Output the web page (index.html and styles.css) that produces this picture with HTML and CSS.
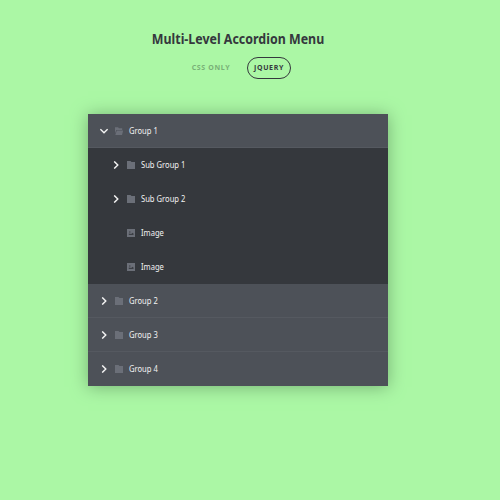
FILE: index.html
```html
<!DOCTYPE html>
<html lang="en">
<head>
<meta charset="utf-8">
<title>Multi-Level Accordion Menu</title>
<link rel="stylesheet" href="styles.css">
</head>
<body>
<svg class="defs" aria-hidden="true">
  <symbol id="right" viewBox="0 0 8 8"><path d="M2.2 .4 5.8 4 2.2 7.6" fill="none" stroke="#f4f4f4" stroke-width="1.4"/></symbol>
  <symbol id="down" viewBox="0 0 8 8"><path d="M.4 2.2 4 5.8 7.6 2.2" fill="none" stroke="#f4f4f4" stroke-width="1.4"/></symbol>
  <symbol id="folder" viewBox="0 0 8 8"><path d="M0 0h3.5l1 1H8v7H0z" fill="#6b6f78"/></symbol>
  <symbol id="open" viewBox="0 0 8 8"><path d="M0 .3h3l1 1h3.2v1.7H1.3L0 6.5zM1.8 3.4H8.2L7 8H.3z" fill="#6b6f78"/></symbol>
  <symbol id="image" viewBox="0 0 8 8"><path d="M0 0h8v8H0z" fill="#6b6f78"/><path d="M1.8 6V4.4l1.4.4 1.2.2.8-1.2L6.5 4.6V6zM2 2.4h1.5v1H2z" fill="#3c3f45"/></symbol>
</svg>
<header>
  <h1>Multi-Level Accordion Menu</h1>
  <nav><a class="css">CSS Only</a><a class="selected">jQuery</a></nav>
</header>
<ul class="menu">
  <li><a class="row"><svg class="arrow"><use href="#down"/></svg><svg class="icon"><use href="#open"/></svg><span>Group 1</span></a>
    <ul class="sub">
      <li class="row"><svg class="arrow"><use href="#right"/></svg><svg class="icon"><use href="#folder"/></svg><span>Sub Group 1</span></li>
      <li class="row"><svg class="arrow"><use href="#right"/></svg><svg class="icon"><use href="#folder"/></svg><span>Sub Group 2</span></li>
      <li class="row leaf"><svg class="icon"><use href="#image"/></svg><span>Image</span></li>
      <li class="row leaf"><svg class="icon"><use href="#image"/></svg><span>Image</span></li>
    </ul>
  </li>
  <li><a class="row"><svg class="arrow"><use href="#right"/></svg><svg class="icon"><use href="#folder"/></svg><span>Group 2</span></a></li>
  <li><a class="row"><svg class="arrow"><use href="#right"/></svg><svg class="icon"><use href="#folder"/></svg><span>Group 3</span></a></li>
  <li><a class="row"><svg class="arrow"><use href="#right"/></svg><svg class="icon"><use href="#folder"/></svg><span>Group 4</span></a></li>
</ul>
</body>
</html>
```
FILE: styles.css
```css
* { box-sizing: border-box; }
body {
  margin: 0;
  height: 500px;
  overflow: hidden;
  background: #abf7a5;
  color: #35383d;
  font-family: "Noto Sans", sans-serif;
}
.defs { display: none; }
header { width: 476px; padding-top: 29px; text-align: center; }
h1 { margin: 0; font-size: 14px; line-height: 20px; font-weight: 700; transform: scaleX(.887); white-space: nowrap; }
nav { display: flex; gap: 11px; margin: 8px 0 0 186px; font-size: 7px; font-weight: 700; line-height: 20px; letter-spacing: .65px; text-transform: uppercase; }
nav a { height: 22px; border: 1px solid transparent; border-radius: 11px; white-space: nowrap; }
.css { width: 50px; color: #79b077; }
.selected { width: 44px; border-color: #35383d; }
ul { margin: 0; padding: 0; list-style: none; }
.menu { width: 300px; margin: 35px 0 0 88px; box-shadow: 0 1px 16px #75b073; }
.row {
  display: flex;
  align-items: center;
  height: 34px;
  padding-left: 12px;
  background: #4d5158;
  box-shadow: inset 0 -1px #555960;
  color: #f2f2f2;
  font-size: 8px;
}
.row span { transform: translateY(-1px) scaleX(.95); transform-origin: left; }
.menu > li:last-child .row { box-shadow: none; }
.sub .row { padding-left: 24px; background: #35383d; box-shadow: none; }
.sub .leaf { padding-left: 39px; }
.arrow { width: 8px; height: 8px; margin-right: 7px; }
.icon { width: 8px; height: 8px; margin-right: 6px; overflow: visible; }
```
